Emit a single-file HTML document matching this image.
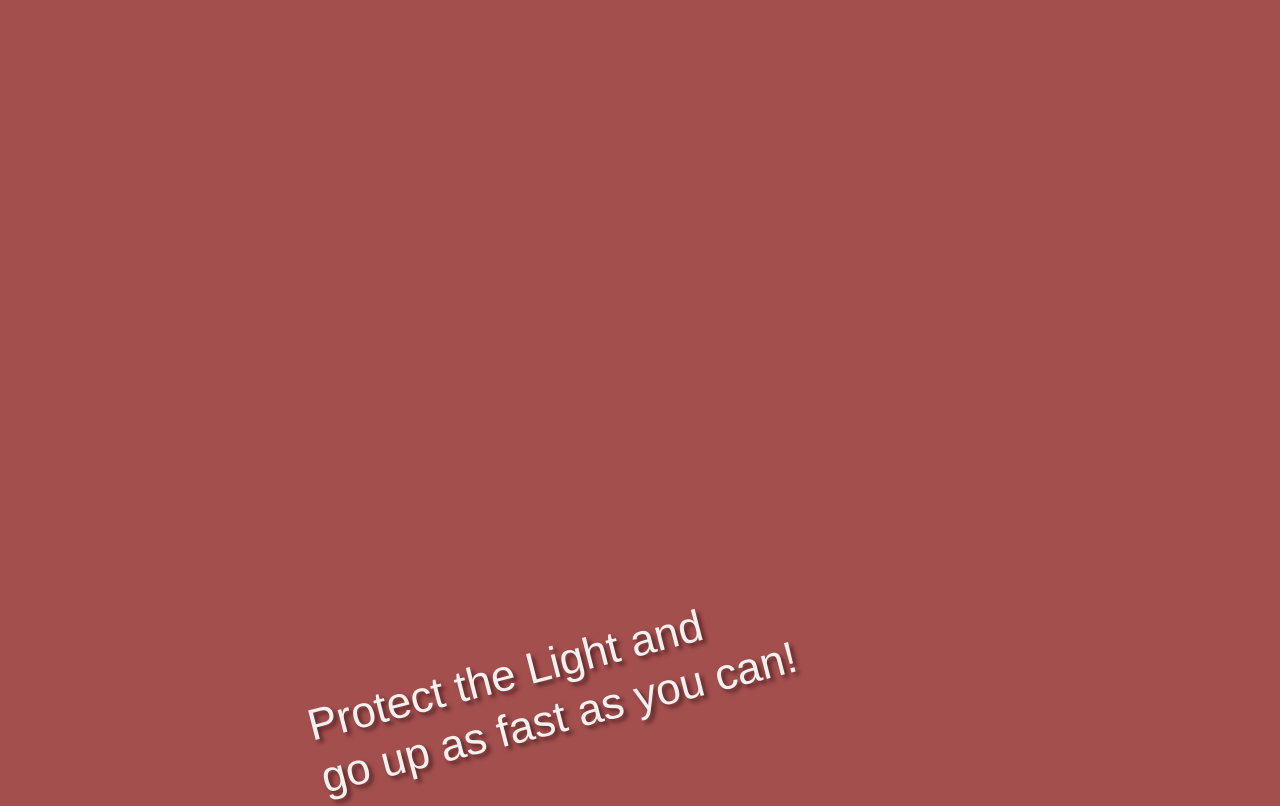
<!DOCTYPE html>
<html><head><style>
html,body{margin:0;padding:0;width:1280px;height:800px;overflow:hidden;background:#a34f4e;}
.t{position:absolute;left:302px;top:701px;transform-origin:0 0;transform:rotate(-14.5deg);
font-family:"Liberation Sans",Arial,sans-serif;font-size:44px;line-height:54px;color:#f3f0f0;white-space:nowrap;
text-shadow:3px 4px 4px rgba(40,10,10,0.6);}
</style></head><body>
<div class="t">Protect the Light and<br>go up as fast as you can!</div>
</body></html>
